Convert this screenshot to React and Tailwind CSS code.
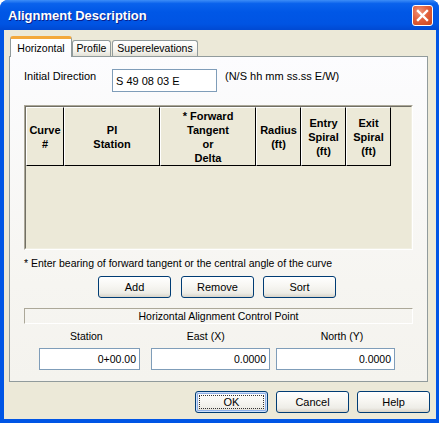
import React from "react";

function XPButton({ children, primary, className = "" }) {
  return (
    <button
      className={`relative w-[73px] h-[22px] rounded-[3px] border border-[#003C74] bg-[linear-gradient(180deg,#FFFFFF_0%,#F7F6F2_45%,#EEEDE7_80%,#D8D3C8_100%)] text-[11px] leading-[13px] text-black flex items-center justify-center ${
        primary ? "shadow-[inset_0_0_0_1px_#CEE0FB,inset_0_0_0_2px_#8FB0E8]" : ""
      } ${className}`}
    >
      {primary && <span className="absolute inset-[3px] border border-dotted border-[#333]" />}
      {children}
    </button>
  );
}

function HeaderCell({ w, children }) {
  return (
    <div
      className={`${w} h-[59px] border-t border-l border-white border-r border-b border-r-black border-b-black flex items-center justify-center text-center font-bold text-[11px] leading-[14px] text-black`}
    >
      <div>{children}</div>
    </div>
  );
}

function Field({ w, value, className = "" }) {
  return (
    <div
      className={`${w} h-[22px] border border-[#7F9DB9] bg-white flex items-center justify-end pr-[3px] text-black ${className}`}
    >
      {value}
    </div>
  );
}

export default function App() {
  return (
    <div className="w-[439px] h-[423px] flex flex-col bg-[#0055E5] rounded-t-[8px] overflow-hidden font-['Liberation_Sans',Arial,sans-serif] text-[10.5px] leading-[13px] text-black">
      {/* Title bar */}
      <div className="h-[30px] flex items-center justify-between pl-[8px] pr-[6px] bg-[linear-gradient(180deg,#3D8DF7_0%,#0A62EC_12%,#0057E6_40%,#0054E3_80%,#0049D2_100%)]">
        <span className="text-white font-bold text-[13px] leading-[16px] mt-[1px] [text-shadow:1px_1px_0_#0A1F8A]">
          Alignment Description
        </span>
        <div className="w-[21px] h-[21px] rounded-[3px] border border-white bg-[radial-gradient(circle_at_35%_30%,#F0957A_0%,#E2603C_45%,#C9431B_100%)] flex items-center justify-center">
          <svg width="13" height="13" viewBox="0 0 13 13">
            <path d="M2 2 L11 11 M11 2 L2 11" stroke="white" strokeWidth="2.4" strokeLinecap="square" />
          </svg>
        </div>
      </div>

      {/* Body */}
      <div className="flex-1 ml-[4px] mr-[3px] mb-[4px] bg-[#ECE9D8] flex flex-col">
        {/* Tabs */}
        <div className="mt-[6px] ml-[6px] h-[20px] flex items-end">
          <div className="relative z-10 -mb-px w-[62px] h-[21px] rounded-t-[3px] border-x border-[#919B9C] border-t-[3px] border-t-[#F3A83B] bg-[linear-gradient(180deg,#FFFFFF,#FCFCFE)] flex items-center justify-center">
            Horizontal
          </div>
          <div className="w-[39px] h-[16px] rounded-t-[3px] border-x border-t border-[#919B9C] bg-[linear-gradient(180deg,#FFFFFF,#F3F2EC_70%,#E3E1D6)] flex items-center justify-center">
            Profile
          </div>
          <div className="ml-[1px] w-[86px] h-[16px] rounded-t-[3px] border-x border-t border-[#919B9C] bg-[linear-gradient(180deg,#FFFFFF,#F3F2EC_70%,#E3E1D6)] flex items-center justify-center">
            Superelevations
          </div>
        </div>

        {/* Tab panel */}
        <div className="ml-[5px] w-[419px] h-[326px] border border-[#919B9C] bg-[linear-gradient(180deg,#FCFCFE_0%,#F6F5F1_70%,#F4F3EE_100%)] flex flex-col">
          <div className="mt-[12px] ml-[14px] flex items-start h-[23px]">
            <span className="w-[88px] pt-[1px] text-[11px]">Initial Direction</span>
            <div className="w-[105px] h-[23px] border border-[#7F9DB9] bg-white flex items-center pl-[3px] pt-[1px] text-[11px]">
              S 49 08 03 E
            </div>
            <span className="ml-[8px] pt-[1px] text-[11px]">(N/S hh mm ss.ss E/W)</span>
          </div>

          {/* Grid */}
          <div className="mt-[13px] ml-[14px] w-[389px] h-[145px] border border-t-[#ACA899] border-l-[#ACA899] border-b-white border-r-white">
            <div className="w-full h-full border border-t-[#716F64] border-l-[#716F64] border-b-[#F1EFE2] border-r-[#F1EFE2] bg-[#ECE9D8]">
              <div className="flex">
                <HeaderCell w="w-[38px]">Curve<br />#</HeaderCell>
                <HeaderCell w="w-[96px]">PI<br />Station</HeaderCell>
                <HeaderCell w="w-[96px]">* Forward<br />Tangent<br />or<br />Delta</HeaderCell>
                <HeaderCell w="w-[45px]">Radius<br />(ft)</HeaderCell>
                <HeaderCell w="w-[45px]">Entry<br />Spiral<br />(ft)</HeaderCell>
                <HeaderCell w="w-[45px]">Exit<br />Spiral<br />(ft)</HeaderCell>
              </div>
            </div>
          </div>

          <div className="mt-[7px] ml-[14px]">* Enter bearing of forward tangent or the central angle of the curve</div>

          <div className="mt-[6px] ml-[88px] flex">
            <XPButton>Add</XPButton>
            <XPButton className="ml-[10px]">Remove</XPButton>
            <XPButton className="ml-[9px]">Sort</XPButton>
          </div>

          <div className="mt-[10px] ml-[14px] w-[389px] h-[16px] border border-t-[#ACA899] border-l-[#ACA899] border-b-white border-r-white flex items-center justify-center">
            Horizontal Alignment Control Point
          </div>

          <div className="mt-[6px] flex">
            <span className="ml-[60px]">Station</span>
            <span className="ml-[84px]">East (X)</span>
            <span className="ml-[96px]">North (Y)</span>
          </div>

          <div className="mt-[5px] flex">
            <Field w="w-[101px]" value="0+00.00" className="ml-[29px]" />
            <Field w="w-[119px]" value="0.0000" className="ml-[11px]" />
            <Field w="w-[119px]" value="0.0000" className="ml-[6px]" />
          </div>
        </div>

        {/* Dialog buttons */}
        <div className="mt-[9px] pr-[6px] flex justify-end">
          <XPButton primary>OK</XPButton>
          <XPButton className="ml-[8px]">Cancel</XPButton>
          <XPButton className="ml-[8px]">Help</XPButton>
        </div>
      </div>
    </div>
  );
}
